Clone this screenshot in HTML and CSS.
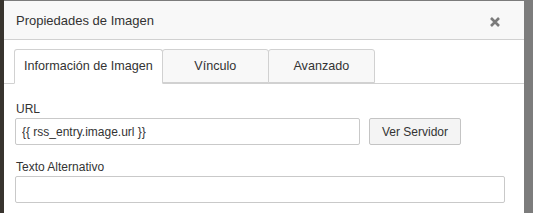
FILE: index.html
```html
<!DOCTYPE html>
<html lang="es">
<head>
    <meta charset="UTF-8">
    <meta name="viewport" content="width=device-width, initial-scale=1.0">
    <title>Propiedades de Imagen</title>
    <link rel="stylesheet" href="styles.css">
</head>
<body>
    <div class="dialog">
        <div class="dialog-header">
            <span class="dialog-title">Propiedades de Imagen</span>
            <span class="dialog-close" title="Cerrar">
                <svg width="10" height="10" viewBox="0 0 10 10">
                    <path d="M1 1 L9 9 M9 1 L1 9" stroke="#7b7b7b" stroke-width="2.6" stroke-linecap="butt"/>
                </svg>
            </span>
        </div>
        <div class="tabs">
            <a class="tab active">Información de Imagen</a>
            <a class="tab">Vínculo</a>
            <a class="tab">Avanzado</a>
        </div>
        <div class="dialog-body">
            <label class="field-label" for="url">URL</label>
            <div class="url-row">
                <input type="text" id="url" class="field url-input" value="{{ rss_entry.image.url }}">
                <button type="button" class="btn">Ver Servidor</button>
            </div>
            <label class="field-label label-alt" for="alt">Texto Alternativo</label>
            <input type="text" id="alt" class="field">
        </div>
    </div>
</body>
</html>
```

FILE: styles.css
```css
html, body {
    height: 100%;
}
body {
    margin: 0;
    overflow: hidden;
    font-family: 'Liberation Sans', Arial, sans-serif;
    color: #333;
    background: linear-gradient(to right, #38342e 4px, #7c7c7c 4px);
}
.dialog {
    margin: 1px 0 0 4px;
    width: 520px;
    height: calc(100% - 1px);
    background-color: #ffffff;
}
.dialog-header {
    display: flex;
    align-items: center;
    justify-content: space-between;
    height: 38px;
    padding: 0 24px 0 12px;
    background-color: #f8f8f8;
    border-bottom: 1px solid #d1d1d1;
}
.dialog-title {
    font-size: 13px;
    color: #333;
    padding-top: 1px;
}
.dialog-close {
    display: flex;
    cursor: pointer;
    padding-top: 4px;
}
.tabs {
    display: flex;
    margin-top: 9px;
    padding-left: 10px;
    border-bottom: 1px solid #d1d1d1;
}
.tab {
    box-sizing: border-box;
    min-width: 107px;
    height: 34px;
    line-height: 33px;
    padding: 0 9px;
    margin-bottom: -1px;
    margin-right: -1px;
    text-align: center;
    font-size: 12.6px;
    color: #333;
    background-color: #f8f8f8;
    border: 1px solid #d1d1d1;
    border-radius: 3px 3px 0 0;
    cursor: pointer;
}
.tab.active {
    background-color: #ffffff;
    border-bottom-color: #ffffff;
    height: 35px;
}
.dialog-body {
    padding: 17px 19px 0 11px;
}
.field-label {
    display: block;
    font-size: 12px;
    line-height: 16px;
    padding-left: 1px;
    margin-bottom: 1px;
    color: #333;
}
.label-alt {
    margin-top: 14px;
}
.url-row {
    display: flex;
    gap: 9px;
}
.field {
    box-sizing: border-box;
    display: block;
    width: 100%;
    height: 27px;
    padding: 0 6px;
    font-family: 'Liberation Sans', Arial, sans-serif;
    font-size: 12px;
    color: #333;
    background-color: #ffffff;
    border: 1px solid #c9c9c9;
    border-radius: 2px;
    outline: none;
}
.url-input {
    width: 345px;
}
.btn {
    box-sizing: border-box;
    width: 92px;
    height: 27px;
    font-family: 'Liberation Sans', Arial, sans-serif;
    font-size: 12px;
    color: #333;
    background-color: #f4f4f4;
    border: 1px solid #c4c4c4;
    border-radius: 2px;
    cursor: pointer;
}
```
